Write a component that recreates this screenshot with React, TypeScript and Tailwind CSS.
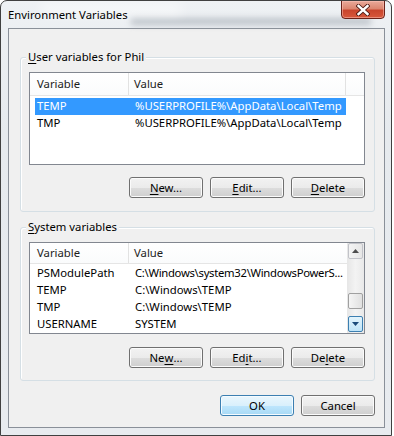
import React from "react";

const btn =
  "w-[74px] h-[21px] rounded-[3px] border border-[#707070] bg-[linear-gradient(to_bottom,#f2f2f2_0%,#ebebeb_50%,#dddddd_51%,#cfcfcf_100%)] shadow-[inset_0_0_0_1px_#fbfbfb] flex items-center justify-center text-[11.3px] leading-none text-black";

const okBtn =
  "w-[74px] h-[21px] rounded-[3px] border border-[#3c7fb1] bg-[linear-gradient(to_bottom,#eaf6fd_0%,#d9f0fc_50%,#bee6fd_51%,#a7d9f5_100%)] shadow-[inset_0_0_0_1px_#f4fbff] flex items-center justify-center text-[11.3px] leading-none text-black";

function Btn({ children, ok }: { children: React.ReactNode; ok?: boolean }) {
  return <div className={ok ? okBtn : btn}>{children}</div>;
}

function Header({ withScrollGap }: { withScrollGap: boolean }) {
  return (
    <div className="flex h-[23px] border-b border-[#e5e5e5] bg-[linear-gradient(to_bottom,#ffffff,#fafbfc)] text-[#1c1c1c]">
      <div className="w-[99px] pl-[7px] flex items-center border-r border-[#e2e2e2]">Variable</div>
      <div className={(withScrollGap ? "w-[217px] border-r border-[#e2e2e2] " : "flex-1 ") + "pl-[5px] flex items-center"}>Value</div>
    </div>
  );
}

function Row({ name, value, selected, tight }: { name: string; value: string; selected?: boolean; tight?: boolean }) {
  return (
    <div className="pl-[5px]">
      <div
        className={
          "flex h-[17px] w-[311px] items-center whitespace-nowrap " +
          (selected ? "bg-[#3399ff] text-white" : "text-black")
        }
      >
        <div className="w-[94px] pl-[2px] overflow-hidden">{name}</div>
        <div className={"w-[217px] pl-[6px] " + (tight ? "tracking-[-0.3px]" : "overflow-hidden")}>{value}</div>
      </div>
    </div>
  );
}

function Arrow({ up, color }: { up?: boolean; color: string }) {
  return (
    <svg width="7" height="4" viewBox="0 0 7 4">
      {up ? <path d="M0 4 L3.5 0 L7 4 Z" fill={color} /> : <path d="M0 0 L7 0 L3.5 4 Z" fill={color} />}
    </svg>
  );
}

function ScrollBar() {
  return (
    <div className="w-[17px] flex flex-col bg-[linear-gradient(to_right,#e6e6e6,#f3f3f3_50%,#e9e9e9)] pb-[1px]">
      <div className="h-[16px] mx-[1px] rounded-[2px] border border-[#c2c3c9] bg-[linear-gradient(to_right,#f4f4f4,#e6e6e6)] flex items-center justify-center">
        <Arrow up color="#4d4d4d" />
      </div>
      <div className="h-[34px]" />
      <div className="h-[16px] mx-[1px] rounded-[2px] border border-[#a0a0a0] bg-[linear-gradient(to_right,#f5f5f5,#e0e0e0)]" />
      <div className="flex-1" />
      <div className="h-[16px] mx-[1px] rounded-[2px] border border-[#3c7fb1] bg-[linear-gradient(to_bottom,#e3f4fc,#bfe4f8)] flex items-center justify-center">
        <Arrow color="#1a4a7a" />
      </div>
    </div>
  );
}

function GroupBox({ title, children, className }: { title: React.ReactNode; children: React.ReactNode; className?: string }) {
  return (
    <div className={"relative w-[355px] rounded-[3px] border border-[#d5dfe5] shadow-[inset_1px_1px_0_#ffffff] " + (className ?? "")}>
      <div className="absolute -top-[9px] left-[5px] bg-[#f0f0f0] px-[2px] leading-[16px] text-black">{title}</div>
      {children}
    </div>
  );
}

export default function App() {
  return (
    <div className="w-[394px] h-[436px] bg-white font-['Noto_Sans',sans-serif] text-[11.3px] text-black">
      <div className="relative w-[392px] h-[436px] rounded-t-[7px] border border-[#404040] bg-[linear-gradient(to_bottom,#eef1f4_0%,#e6eaee_30%,#e8ebef_100%)] pl-[7px] pr-[6px] pb-[7px] flex flex-col overflow-hidden">
        <div className="pointer-events-none absolute left-[130px] top-[17px] w-[240px] h-[7px] bg-[#8f98a2] blur-[3px] opacity-50" />
        <div className="pointer-events-none absolute left-[40px] top-[3px] w-[140px] h-[10px] bg-white blur-[6px] opacity-60" />
        {/* title bar */}
        <div className="relative h-[27px] flex items-center">
          <div className="leading-[14px] text-[11.3px] text-black mt-[1px]">Environment Variables</div>
          <div className="absolute right-[0px] top-[-1px] w-[44px] h-[19px] rounded-b-[4px] border border-[#6b2219] bg-[linear-gradient(to_bottom,#e9a99a_0%,#dc8670_45%,#c9452d_55%,#d8583c_100%)] shadow-[inset_0_0_0_1px_rgba(255,200,190,0.5)] flex items-center justify-center">
            <svg width="14" height="12" viewBox="0 0 14 12">
              <path d="M2.5 2 L11.5 10 M11.5 2 L2.5 10" stroke="#4a1812" strokeWidth="4.2" strokeLinecap="square" />
              <path d="M2.5 2 L11.5 10 M11.5 2 L2.5 10" stroke="#ffffff" strokeWidth="2.4" strokeLinecap="square" />
            </svg>
          </div>
        </div>
        {/* client area */}
        <div className="flex-1 border border-[#8a9099] bg-[#f0f0f0] pl-[11px] pr-[9px] flex flex-col">
          <GroupBox
            className="mt-[28px] pt-[14px] pl-[8px] pb-[13px]"
            title={
              <span>
                <u className="underline-offset-2">U</u>ser variables for Phil
              </span>
            }
          >
            <div className="w-[336px] h-[93px] border border-[#828790] bg-white">
              <Header withScrollGap />
              <div className="pt-[2px]">
                <Row name="TEMP" value="%USERPROFILE%\AppData\Local\Temp" selected />
                <Row name="TMP" value="%USERPROFILE%\AppData\Local\Temp" />
              </div>
            </div>
            <div className="mt-[12px] w-[336px] flex justify-end gap-[7px]">
              <Btn>
                <u className="underline-offset-2">N</u>ew...
              </Btn>
              <Btn>
                <u className="underline-offset-2">E</u>dit...
              </Btn>
              <Btn>
                <u className="underline-offset-2">D</u>elete
              </Btn>
            </div>
          </GroupBox>

          <GroupBox
            className="mt-[15px] pt-[14px] pl-[8px] pb-[12px]"
            title={
              <span>
                <u className="underline-offset-2">S</u>ystem variables
              </span>
            }
          >
            <div className="w-[336px] h-[92px] border border-[#828790] bg-white flex">
              <div className="flex-1 flex flex-col overflow-hidden">
                <Header withScrollGap={false} />
                <div className="pt-[1px]">
                  <Row name="PSModulePath" value="C:\Windows\system32\WindowsPowerS..." tight />
                  <Row name="TEMP" value="C:\Windows\TEMP" />
                  <Row name="TMP" value="C:\Windows\TEMP" />
                  <Row name="USERNAME" value="SYSTEM" />
                </div>
              </div>
              <ScrollBar />
            </div>
            <div className="mt-[13px] w-[336px] flex justify-end gap-[7px]">
              <Btn>
                Ne<u className="underline-offset-2">w</u>...
              </Btn>
              <Btn>
                Ed<u className="underline-offset-2">i</u>t...
              </Btn>
              <Btn>
                De<u className="underline-offset-2">l</u>ete
              </Btn>
            </div>
          </GroupBox>

          <div className="mt-[14px] w-[355px] flex justify-end gap-[7px]">
            <Btn ok>OK</Btn>
            <Btn>Cancel</Btn>
          </div>
        </div>
      </div>
    </div>
  );
}
